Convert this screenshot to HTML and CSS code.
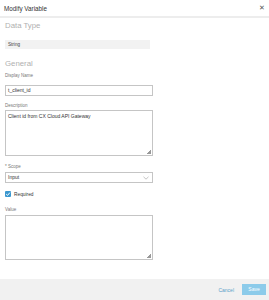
FILE: index.html
```html
<!DOCTYPE html>
<html lang="en">

<head>
  <meta charset="UTF-8" />
  <title>Modify Variable</title>
  <link rel="stylesheet" href="styles.css">
</head>

<body>
  <div class="modal">
    <div class="modal-header">
      <span class="modal-title">Modify Variable</span>
      <span class="modal-close">&#x2715;</span>
    </div>

    <div class="modal-body">
      <h2 class="section-title">Data Type</h2>
      <div class="readonly-box">String</div>

      <h2 class="section-title general">General</h2>

      <label class="field-label name-label">Display Name</label>
      <div class="text-input name-input">t_client_id</div>

      <label class="field-label desc-label">Description</label>
      <div class="text-area">Client id from CX Cloud API Gateway<span class="grip"></span></div>

      <label class="field-label scope-label">* Scope</label>
      <div class="select-input">
        <span>Input</span>
        <svg class="chevron" width="6" height="4" viewBox="0 0 6 4"><path d="M0.5 0.8 L3 3.2 L5.5 0.8" fill="none" stroke="#aaa" stroke-width="0.7"/></svg>
      </div>

      <div class="checkbox-row">
        <span class="checkbox">
          <svg width="6" height="6" viewBox="0 0 6 6"><path d="M1.2 3.1 L2.5 4.4 L4.9 1.6" fill="none" stroke="#fff" stroke-width="1"/></svg>
        </span>
        <span class="checkbox-label">Required</span>
      </div>

      <label class="field-label value-label">Value</label>
      <div class="text-area value"><span class="grip"></span></div>
    </div>

    <div class="modal-footer">
      <span class="btn-cancel">Cancel</span>
      <span class="btn-save">Save</span>
    </div>
  </div>
</body>

</html>
```

FILE: styles.css
```css
body {
  margin: 0;
  background-color: #fff;
  font-family: 'Liberation Sans', Arial, sans-serif;
  color: #333;
}

.modal {
  width: 269px;
  height: 300px;
  display: flex;
  flex-direction: column;
}

.modal-header {
  height: 16px;
  display: flex;
  align-items: center;
  justify-content: space-between;
  padding: 0 4px 0 4px;
  border-bottom: 2px solid #ededed;
}

.modal-title {
  font-size: 6.3px;
  color: #333;
}

.modal-close {
  font-size: 7px;
  color: #555;
}

.modal-body {
  flex: 1;
  padding: 0 5px;
}

.section-title {
  margin: 3px 0 0 0;
  font-size: 7.8px;
  font-weight: normal;
  color: #b0b0b0;
  line-height: 10px;
}

.section-title.general {
  margin-top: 10px;
}

.readonly-box {
  margin-top: 9px;
  width: 142px;
  height: 9px;
  line-height: 9px;
  padding-left: 3px;
  background: #f2f2f2;
  font-size: 4.6px;
  color: #444;
}

.field-label {
  display: block;
  margin-top: 7px;
  font-size: 4.5px;
  line-height: 6px;
  color: #777;
}

.name-label {
  margin-top: 4px;
}

.scope-label {
  margin-top: 8px;
}

.value-label {
  margin-top: 10px;
}

.text-input,
.select-input {
  margin-top: 2px;
  width: 142px;
  height: 9px;
  line-height: 9px;
  padding: 0 2px;
  border: 1px solid #c5c5c5;
  font-size: 5px;
  color: #333;
}

.name-input {
  margin-top: 6px;
}

.select-input {
  display: flex;
  justify-content: space-between;
  align-items: center;
}

.chevron {
  margin-right: 1px;
}

.text-area {
  position: relative;
  margin-top: 1px;
  width: 142px;
  height: 40px;
  padding: 2px 2px;
  border: 1px solid #c5c5c5;
  font-size: 5px;
  line-height: 6px;
  color: #333;
}

.text-area.value {
  margin-top: 2px;
  height: 39px;
}

.grip {
  position: absolute;
  right: 1px;
  bottom: 1px;
  width: 4px;
  height: 4px;
  background: linear-gradient(135deg, transparent 50%, #999 50%);
}

.checkbox-row {
  display: flex;
  align-items: center;
  margin-top: 8px;
  gap: 3px;
}

.checkbox {
  width: 6px;
  height: 6px;
  background: #3a97cf;
  border-radius: 1px;
  display: flex;
}

.checkbox-label {
  font-size: 4.8px;
  color: #333;
}

.modal-footer {
  height: 21px;
  background: #f1f1f1;
  display: flex;
  align-items: center;
  justify-content: flex-end;
  padding: 0 3px 0 0;
  gap: 8px;
}

.btn-cancel {
  font-size: 5px;
  color: #5aa0c8;
}

.btn-save {
  width: 24px;
  height: 11px;
  line-height: 11px;
  text-align: center;
  background: #8ccbea;
  color: #fff;
  font-size: 5px;
}
```
